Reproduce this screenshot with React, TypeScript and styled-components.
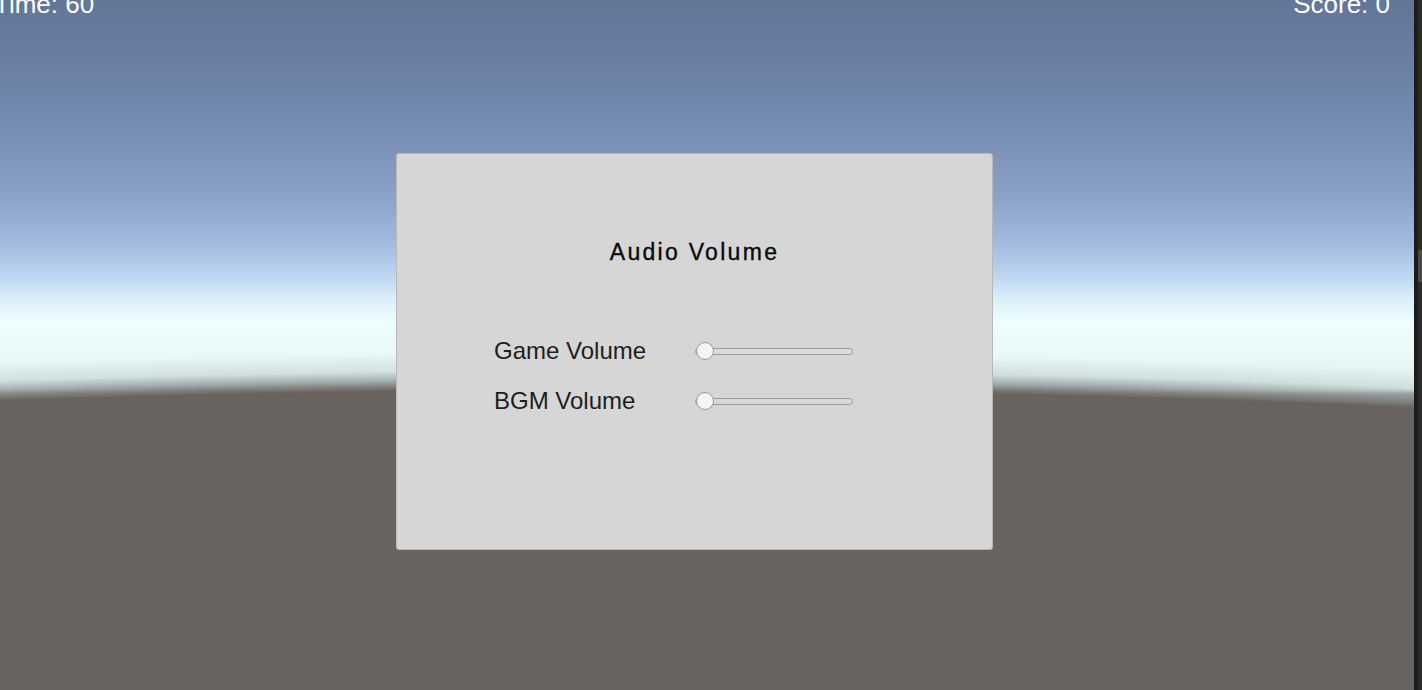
import React from "react";
import styled, { createGlobalStyle } from "styled-components";

const Global = createGlobalStyle`
  html, body { margin: 0; padding: 0; overflow: hidden; }
  body { font-family: "Liberation Sans", Arial, sans-serif; }
`;

const Screen = styled.div`
  display: flex;
  width: 1422px;
  height: 690px;
  overflow: hidden;
`;

const GameView = styled.main`
  flex: 1;
  display: flex;
  flex-direction: column;
  overflow: hidden;
  background:
    radial-gradient(
      ellipse 4000px 884px at 620px 1272px,
      #69635f 99.75%,
      #7a7774 100.15%,
      rgba(150, 158, 158, 0.85) 100.9%,
      rgba(196, 212, 212, 0.6) 102%,
      rgba(232, 250, 252, 0) 104%
    ),
    linear-gradient(
      to bottom,
      #637698 0px,
      #697ea2 60px,
      #7a8fb6 140px,
      #8ba2c8 195px,
      #a2bbdf 245px,
      #c0d8f2 278px,
      #dcf0fb 300px,
      #eefeff 322px,
      #eafafb 350px,
      #e0eeee 390px,
      #69635f 395px
    );
`;

const Hud = styled.header`
  display: flex;
  justify-content: space-between;
  margin: -9px 24px 0 -6px;
  height: 26px;
  font-size: 26px;
  line-height: 26px;
  color: #ffffff;
`;

const HudText = styled.span`
  white-space: nowrap;
`;

const Panel = styled.section`
  box-sizing: border-box;
  width: 597px;
  height: 397px;
  margin: 136px 0 0 396px;
  padding: 87px 0 0 97px;
  background: #d6d6d6;
  border: 1px solid #b8b8b8;
  border-radius: 3px;
  display: flex;
  flex-direction: column;
`;

const Title = styled.h1`
  margin: 0 0 0 -97px;
  font-size: 23px;
  line-height: 23px;
  font-weight: 400;
  letter-spacing: 2.3px;
  text-align: center;
  color: #080808;
  -webkit-text-stroke: 0.35px #080808;
`;

const Rows = styled.div`
  display: grid;
  grid-template-columns: 201px 158px;
  grid-auto-rows: 24px;
  row-gap: 26px;
  margin-top: 75px;
`;

const Label = styled.span`
  font-size: 24px;
  line-height: 24px;
  color: #1e1e1e;
  white-space: nowrap;
`;

const SliderBox = styled.div`
  display: flex;
  align-items: center;
`;

const Track = styled.div`
  position: relative;
  box-sizing: border-box;
  width: 158px;
  height: 7px;
  border: 1px solid #9c9c9c;
  border-radius: 4px;
  background: #d9d9d9;
`;

const Thumb = styled.div`
  position: absolute;
  top: 50%;
  box-sizing: border-box;
  width: 18px;
  height: 18px;
  margin-top: -9px;
  border-radius: 50%;
  border: 1px solid #9a9a9a;
  background: #f4f4f4;
`;

const SideBar = styled.aside`
  width: 8px;
  display: flex;
`;

const Edge = styled.div`
  width: 4px;
  background: #1b1b1b;
`;

const Gutter = styled.div`
  flex: 1;
  background: #2b2b2b;
  padding-top: 250px;
`;

const ScrollThumb = styled.div`
  height: 32px;
  background: #494949;
`;

function Slider({ value }: { value: number }) {
  return (
    <SliderBox>
      <Track>
        <Thumb style={{ left: `${value * (158 - 18)}px` }} />
      </Track>
    </SliderBox>
  );
}

export default function App() {
  const rows = [
    { label: "Game Volume", value: 0 },
    { label: "BGM Volume", value: 0 },
  ];
  return (
    <>
      <Global />
      <Screen>
        <GameView>
          <Hud>
            <HudText>Time: 60</HudText>
            <HudText>Score: 0</HudText>
          </Hud>
          <Panel>
            <Title>Audio Volume</Title>
            <Rows>
              {rows.map((r) => (
                <React.Fragment key={r.label}>
                  <Label>{r.label}</Label>
                  <Slider value={r.value} />
                </React.Fragment>
              ))}
            </Rows>
          </Panel>
        </GameView>
        <SideBar>
          <Edge />
          <Gutter>
            <ScrollThumb />
          </Gutter>
        </SideBar>
      </Screen>
    </>
  );
}
